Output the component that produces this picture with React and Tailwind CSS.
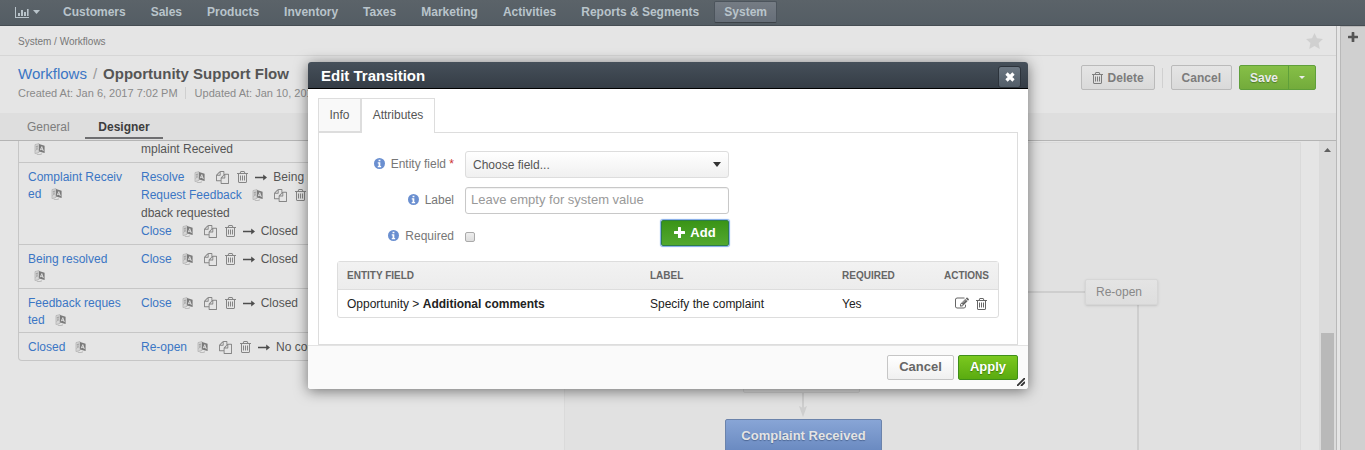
import React from "react";

const TRASH =
  "M704 736v576q0 14-9 23t-23 9h-64q-14 0-23-9t-9-23v-576q0-14 9-23t23-9h64q14 0 23 9t9 23zm256 0v576q0 14-9 23t-23 9h-64q-14 0-23-9t-9-23v-576q0-14 9-23t23-9h64q14 0 23 9t9 23zm256 0v576q0 14-9 23t-23 9h-64q-14 0-23-9t-9-23v-576q0-14 9-23t23-9h64q14 0 23 9t9 23zm128 724v-948h-896v948q0 22 7 40.5t14.5 27 10.5 8.5h832q3 0 10.5-8.5t14.5-27 7-40.5zm-672-1076h448l-48-117q-7-9-17-11h-317q-10 2-17 11zm928 32v64q0 14-9 23t-23 9h-96v948q0 83-47 143.5t-113 60.5h-832q-66 0-113-58.5t-47-141.5v-952h-96q-14 0-23-9t-9-23v-64q0-14 9-23t23-9h309l70-167q15-37 54-63t79-26h320q40 0 79 26t54 63l70 167h309q14 0 23 9t9 23z";
const FILES =
  "M1696 384q40 0 68 28t28 68v1216q0 40-28 68t-68 28h-960q-40 0-68-28t-28-68v-288h-544q-40 0-68-28t-28-68v-672q0-40 20-88t48-76l408-408q28-28 76-48t88-20h416q40 0 68 28t28 68v328q68-40 128-40h416zm-544 213l-299 299h299v-299zm-640-384l-299 299h299v-299zm196 647l316-316v-416h-384v416q0 40-28 68t-68 28h-416v640h512v-256q0-40 20-88t48-76zm956 804v-1152h-384v416q0 40-28 68t-68 28h-416v640h896z";
const EDIT =
  "M888 1184l116-116-152-152-116 116v56h96v96h56zm440-720q-16-16-33 1l-350 350q-17 17-1 33t33-1l350-350q17-17 1-33zm80 594v190q0 119-84.5 203.5t-203.5 84.5h-832q-119 0-203.5-84.5t-84.5-203.5v-832q0-119 84.5-203.5t203.5-84.5h832q63 0 117 25 15 7 18 23 3 17-9 29l-49 49q-14 14-32 8-23-6-45-6h-832q-66 0-113 47t-47 113v832q0 66 47 113t113 47h832q66 0 113-47t47-113v-126q0-13 9-22l64-64q15-15 35-7t20 29zm-96-738l288 288-672 672h-288v-288zm444 132l-92 92-288-288 92-92q28-28 68-28t68 28l152 152q28 28 28 68t-28 68z";

function TrashIcon({ className = "w-[10px]" }) {
  return (
    <svg className={`h-3 shrink-0 ${className}`} viewBox="192 128 1408 1536" preserveAspectRatio="none" fill="currentColor" aria-hidden="true">
      <path d={TRASH} />
    </svg>
  );
}

function FilesIcon() {
  return (
    <svg className="h-[13px] w-[13px] shrink-0" viewBox="0 0 1792 1792" fill="currentColor" aria-hidden="true">
      <path d={FILES} />
    </svg>
  );
}

function EditIcon() {
  return (
    <svg className="h-[13px] w-[14px] shrink-0" viewBox="0 128 1792 1536" fill="currentColor" aria-hidden="true">
      <path d={EDIT} />
    </svg>
  );
}

function LanguageIcon() {
  return (
    <svg className="h-3 w-[11px] shrink-0" viewBox="0 0 11 12" aria-hidden="true">
      <path d="M1 1.6 5 .6V9.4L1 10.6z" fill="#d6d6d6" stroke="#b4b4b4" strokeWidth=".8" />
      <path d="M1.8 3.6 4.2 3M3 2.8C3.4 5 2.6 6.6 1.8 7.4M2.4 5 4.4 6.8" fill="none" stroke="#959595" strokeWidth=".7" />
      <path d="M5 1 10.6 2.8V10L5 8.4z" fill="#7a7a7a" />
      <path d="M6.3 7.2 7.8 3.6 9.3 8M6.8 6.1 8.9 6.7" fill="none" stroke="#e2e2e2" strokeWidth=".9" />
      <path d="M2.6 11 5 11.8 8 10.8" fill="none" stroke="#a8a8a8" strokeWidth=".8" />
    </svg>
  );
}

function ArrowIcon() {
  return (
    <svg className="h-[7px] w-3 shrink-0" viewBox="0 0 12 7" aria-hidden="true">
      <path d="M0 2.7H8.2V.6L12 3.5 8.2 6.4V4.3H0z" fill="#4d4d4d" />
    </svg>
  );
}

function InfoIcon() {
  return (
    <svg className="h-[11px] w-[11px] shrink-0" viewBox="0 0 12 12" aria-hidden="true">
      <circle cx="6" cy="6" r="6" fill="#6a8fd0" />
      <path d="M5 1.8h2v1.7H5zM4.1 4.6h2.8v4h.9V10H4.1V8.6H5V6h-.9z" fill="#fff" />
    </svg>
  );
}

function PlusIcon({ className = "h-[11px] w-[11px]" }) {
  return (
    <svg className={`shrink-0 ${className}`} viewBox="0 0 11 11" fill="currentColor" aria-hidden="true">
      <path d="M4.6 0h1.8q.6 0 .6.6V4h3.4q.6 0 .6.6v1.8q0 .6-.6.6H7v3.4q0 .6-.6.6H4.6q-.6 0-.6-.6V7H.6Q0 7 0 6.4V4.6Q0 4 .6 4H4V.6Q4 0 4.6 0z" />
    </svg>
  );
}

function Caret({ className = "" }) {
  return (
    <svg className={`shrink-0 ${className}`} viewBox="0 0 8 4" preserveAspectRatio="none" fill="currentColor" aria-hidden="true">
      <path d="M0 0h8L4 4z" />
    </svg>
  );
}

const NAV = ["Customers", "Sales", "Products", "Inventory", "Taxes", "Marketing", "Activities", "Reports & Segments"];

function TopNav() {
  return (
    <nav className="flex h-[26px] shrink-0 items-center gap-[5px] border-b border-[#464d53] bg-gradient-to-b from-[#5b6369] to-[#545d64] pb-px text-xs font-bold text-[#b9c4cb]">
      <button type="button" aria-label="Dashboards" className="flex items-center gap-1 pr-2 pl-[15px]">
        <svg className="h-[11px] w-[14px]" viewBox="0 0 14 11" fill="currentColor" aria-hidden="true">
          <path d="M0 0h1v10h13v1H0zM3 6h2v3H3zM6 3h2v6H6zM9 5h2v4H9zM12 2h1.6v7H12z" />
        </svg>
        <Caret className="h-1 w-[7px]" />
      </button>
      {NAV.map((n) => (
        <a key={n} href="#" className="px-[10px] whitespace-nowrap">
          {n}
        </a>
      ))}
      <a
        href="#"
        className="flex h-[22px] items-center rounded-xs border border-[#4c545c] border-b-[#3c4247] bg-gradient-to-b from-[#757c84] to-[#666e78] px-[9px]"
      >
        System
      </a>
    </nav>
  );
}

function PageHeader() {
  const btn =
    "flex h-[25px] items-center rounded-xs border border-[#bababa] bg-gradient-to-b from-[#e5e5e5] to-[#d9d9d9] text-xs font-bold text-[#7c7c7c]";
  return (
    <>
      <div className="flex h-[30px] shrink-0 items-center justify-between border-b border-[#d6d6d6] pt-px pr-[13px] pl-[18px] text-[10px] text-[#777]">
        <div>
          <a href="#">System</a> / <a href="#">Workflows</a>
        </div>
        <svg className="h-4 w-[17px]" viewBox="0 0 17 16" aria-label="Pin to favorites" role="img">
          <path d="M8.5 0 11 5.2 17 6 12.6 9.9 13.8 16 8.5 13 3.2 16 4.4 9.9 0 6 6 5.2z" fill="#d0d0d0" />
        </svg>
      </div>
      <div className="flex h-[57px] shrink-0 items-start justify-between pt-[9px] pr-[20px] pl-[18px]">
        <div>
          <h1 className="text-[15px] leading-[18px] whitespace-nowrap text-[#999]">
            <a href="#" className="text-[#3b76c4]">Workflows</a>
            <span className="px-[6px]">/</span>
            <span className="font-bold text-[#555]">Opportunity Support Flow</span>
          </h1>
          <div className="mt-1 flex h-3 items-center text-[11px] whitespace-nowrap text-[#8a8a8a]">
            <span>Created At: Jan 6, 2017 7:02 PM</span>
            <span className="mr-[9px] ml-[7px] h-3 w-px bg-[#cfcfcf]" />
            <span>Updated At: Jan 10, 2017 2:14 PM</span>
          </div>
        </div>
        <div className="flex items-center">
          <button type="button" className={`${btn} gap-[5px] px-[10px]`}>
            <TrashIcon className="w-[11px]" />
            Delete
          </button>
          <span className="mr-2 ml-[7px] h-5 w-px bg-[#d0d0d0]" />
          <button type="button" className={`${btn} px-[10px]`}>
            Cancel
          </button>
          <div className="ml-[7px] flex h-[25px] rounded-xs border border-[#5f9f3a] bg-gradient-to-b from-[#86bf47] to-[#73ab3b] text-xs font-bold text-[#ebebeb]">
            <button type="button" className="px-[10px] [text-shadow:0_1px_1px_#4d7a2a]">
              Save
            </button>
            <button type="button" aria-label="More save options" className="flex w-[27px] items-center justify-center border-l border-[#5f9f3a]">
              <Caret className="h-[3px] w-[6px]" />
            </button>
          </div>
        </div>
      </div>
      <div className="flex h-7 shrink-0 items-stretch border-b border-[#b4b4b4] bg-[#dedede] pl-4 text-xs">
        <button type="button" className="w-[69px] pl-[11px] text-left text-[#7d7d7d]">
          General
        </button>
        <button type="button" className="mb-px w-[78px] border-b-2 border-[#6e6e70] pt-[3px] text-center font-bold text-[#3d3d3d]">
          Designer
        </button>
      </div>
    </>
  );
}

function Transition({ name, target }) {
  return (
    <div className="flex h-[18px] items-center whitespace-nowrap">
      <a href="#" className="text-[#3b76c4]">
        {name}
      </a>
      <span className="ml-[10px] flex items-center text-[#858585]">
        <LanguageIcon />
        <span className="ml-[11px] flex">
          <FilesIcon />
        </span>
        <TrashIcon className="ml-2 w-[11px]" />
      </span>
      <span className="mr-[6px] ml-[7px] flex">
        <ArrowIcon />
      </span>
      {target}
    </div>
  );
}

const STEPS = [
  { name: ["Complaint Receiv", "ed"], moves: [["Resolve", "Being resolved"], ["Request Feedback", "Fee", "dback requested"], ["Close", "Closed"]] },
  { name: ["Being resolved", ""], moves: [["Close", "Closed"]] },
  { name: ["Feedback reques", "ted"], moves: [["Close", "Closed"]] },
  { name: ["Closed"], moves: [["Re-open", "No complaint"]] },
];

function StepTable() {
  return (
    <div className="w-[565px] shrink-0 overflow-hidden pr-4 pl-[18px] text-xs text-[#555]">
      <table className="w-full table-fixed border-separate border-spacing-0 rounded-b-sm border border-t-0 border-[#c6c6c6]">
        <colgroup>
          <col className="w-[112px]" />
          <col />
        </colgroup>
        <tbody>
          <tr>
            <td className="pb-[5px] pl-[15px] align-top">
              <span className="flex h-[15px] items-center">
                <LanguageIcon />
              </span>
            </td>
            <td className="pb-[5px] pl-[10px] align-top leading-4">mplaint Received</td>
          </tr>
          {STEPS.map((s) => (
            <tr key={s.name[0]}>
              <td className="border-t border-[#c6c6c6] pt-[5px] pb-1 pl-[9px] align-top">
                {s.name.map((part, i) => (
                  <div key={i} className="flex h-[17px] items-center whitespace-nowrap">
                    <a href="#" className="text-[#3b76c4]">
                      {part}
                    </a>
                    {i === s.name.length - 1 && (
                      <span className={part ? "ml-[10px]" : "ml-[6px]"}>
                        <LanguageIcon />
                      </span>
                    )}
                  </div>
                ))}
              </td>
              <td className="border-t border-[#c6c6c6] pt-[5px] pb-1 pl-[10px] align-top">
                {s.moves.map(([name, target, rest]) => (
                  <React.Fragment key={name}>
                    <Transition name={name} target={target} />
                    {rest && <div className="h-[18px] leading-[18px]">{rest}</div>}
                  </React.Fragment>
                ))}
              </td>
            </tr>
          ))}
        </tbody>
      </table>
    </div>
  );
}

function FlowChart() {
  return (
    <div className="relative mt-px -ml-px grow overflow-hidden border-x border-t border-[#dadada] bg-[#e1e1e1]">
      <svg className="absolute top-0 left-0 h-[320px] w-[700px]" viewBox="0 0 700 320" fill="none" aria-hidden="true">
        <path d="M300 149H530M573 154V320M238 240V266" stroke="#cecece" strokeWidth="2" />
        <path d="M234 263 238 265 242 263 238 274z" fill="#cecece" />
      </svg>
      <div className="absolute top-[136px] left-[520px] flex h-[26px] w-[73px] items-center rounded-xs border border-[#d6d6d6] bg-gradient-to-b from-[#e4e4e4] to-[#dedede] pl-[10px] text-xs text-[#888] shadow-sm">
        Re-open
      </div>
      <div className="absolute top-[224px] left-[178px] h-[26px] w-[117px] rounded-xs border border-[#d0d0d0] bg-[#dedede]" />
      <div className="absolute top-[276px] left-[160px] flex h-[35px] w-[157px] items-center justify-center rounded-xs border border-[#6b83ab] bg-gradient-to-b from-[#88a5d6] to-[#6888bf] pb-px text-[13px] font-bold text-[#e4e4e4] [text-shadow:0_1px_1px_#4d6795]">
        Complaint Received
      </div>
    </div>
  );
}

function Dialog() {
  const th = "border-b border-[#ddd] px-[9px] text-[10px] font-bold text-[#666]";
  const label = "mr-[11px] flex w-[117px] items-center justify-end gap-[6px] pb-[2px] text-xs text-[#777]";
  return (
    <div
      role="dialog"
      aria-modal="true"
      aria-labelledby="dialog-title"
      className="absolute top-[62px] left-[308px] w-[720px] rounded-[3px] bg-white text-xs shadow-[0_2px_14px_rgba(0,0,0,0.5)]"
    >
      <header className="flex h-[27px] items-center justify-between rounded-t-[3px] border-b border-black bg-gradient-to-b from-[#46505a] to-[#353d46] pr-[7px] pl-[13px]">
        <h2 id="dialog-title" className="text-[15px] leading-none font-bold text-white">
          Edit Transition
        </h2>
        <button
          type="button"
          aria-label="Close"
          className="mt-1 flex h-[22px] w-[23px] items-center justify-center rounded-[3px] border border-[#2c333b] bg-gradient-to-b from-[#6d7883] to-[#525d68] text-white"
        >
          <svg className="h-[10px] w-[10px]" viewBox="0 0 10 10" aria-hidden="true">
            <path d="M1.5 1.5 8.5 8.5M8.5 1.5 1.5 8.5" stroke="currentColor" strokeWidth="3.2" />
          </svg>
        </button>
      </header>

      <div className="px-[10px] pt-[9px]">
        <div role="tablist" className="relative z-10 -mb-px flex h-[35px] text-[#555]">
          <button type="button" role="tab" aria-selected="false" className="mb-px w-[43px] border border-[#ddd] bg-[#f9f9f9] text-center">
            Info
          </button>
          <button type="button" role="tab" aria-selected="true" className="w-[74px] border border-b-0 border-[#ddd] bg-white pb-[2px] text-center">
            Attributes
          </button>
        </div>
        <div className="border border-[#ddd] px-[18px] pt-[18px] pb-[26px]">
          <form onSubmit={(e) => e.preventDefault()} className="flex flex-col gap-[9px] pb-[11px]">
            <div className="flex h-[27px]">
              <label htmlFor="field" className={label}>
                <InfoIcon />
                <span>
                  Entity field <span className="text-[#c33]">*</span>
                </span>
              </label>
              <div className="relative flex w-[264px]">
                <select
                  id="field"
                  className="w-full appearance-none rounded-[3px] border border-[#ddd] bg-gradient-to-b from-white to-[#f0f0f0] pl-[7px] text-xs text-[#555]"
                >
                  <option>Choose field...</option>
                </select>
                <span className="pointer-events-none absolute top-[11px] right-2 flex text-[#333]">
                  <Caret className="h-[5px] w-2" />
                </span>
              </div>
            </div>
            <div className="flex h-[27px]">
              <label htmlFor="label" className={label}>
                <InfoIcon />
                Label
              </label>
              <input
                id="label"
                type="text"
                placeholder="Leave empty for system value"
                className="w-[264px] rounded-[3px] border border-[#c8c8c8] px-[5px] pb-[2px] text-[13px] shadow-[inset_0_1px_1px_rgba(0,0,0,0.06)] placeholder:text-[#999]"
              />
            </div>
            <div className="flex h-[27px]">
              <label htmlFor="required" className={label}>
                <InfoIcon />
                Required
              </label>
              <div className="flex w-[264px] items-center justify-between">
                <input
                  id="required"
                  type="checkbox"
                  className="h-[10px] w-[10px] appearance-none rounded-[2px] border border-[#aaa] bg-gradient-to-b from-[#eee] to-[#ddd]"
                />
                <button
                  type="button"
                  className="-mt-2 flex h-[26px] w-[68px] items-center justify-center gap-[5px] rounded-xs border border-[#2c7d4a] bg-gradient-to-b from-[#3a9416] to-[#52a82e] text-[13px] font-bold text-white shadow-[0_0_1px_1px_#7fa9e8]"
                >
                  <PlusIcon />
                  Add
                </button>
              </div>
            </div>
          </form>
          <table className="w-full table-fixed border-separate border-spacing-0 rounded-[3px] border border-[#ddd] text-[#222]">
            <colgroup>
              <col className="w-[303px]" />
              <col className="w-[192px]" />
              <col className="w-[92px]" />
              <col />
            </colgroup>
            <thead>
              <tr className="h-7 bg-gradient-to-b from-[#f2f2f2] to-[#ececec]">
                <th className={`${th} text-left`}>ENTITY FIELD</th>
                <th className={`${th} text-left`}>LABEL</th>
                <th className={`${th} text-left`}>REQUIRED</th>
                <th className={`${th} text-right`}>ACTIONS</th>
              </tr>
            </thead>
            <tbody>
              <tr className="h-[27px]">
                <td className="px-[9px] whitespace-nowrap">
                  Opportunity &gt; <b>Additional comments</b>
                </td>
                <td className="px-[9px]">Specify the complaint</td>
                <td className="px-[9px]">Yes</td>
                <td className="px-[11px]">
                  <div className="flex items-center justify-end gap-[7px] text-[#666]">
                    <button type="button" aria-label="Edit">
                      <EditIcon />
                    </button>
                    <button type="button" aria-label="Delete">
                      <TrashIcon className="w-[11px]" />
                    </button>
                  </div>
                </td>
              </tr>
            </tbody>
          </table>
        </div>
      </div>

      <footer className="relative flex h-11 items-start justify-end gap-1 rounded-b-[3px] border-t border-[#e3e3e3] bg-[#fafafa] pt-[9px] pr-[10px] text-[13px] font-bold">
        <button type="button" className="h-[25px] rounded-xs border border-[#c6c6c6] bg-gradient-to-b from-white to-[#f0f0f0] px-[11px] pb-px text-[#666]">
          Cancel
        </button>
        <button
          type="button"
          className="h-[25px] rounded-xs border border-[#3f8f1a] bg-gradient-to-b from-[#7bc81f] to-[#5aab10] px-[11px] pb-px text-white [text-shadow:0_1px_1px_#3d7a0c]"
        >
          Apply
        </button>
        <svg className="absolute right-[3px] bottom-[3px] h-2 w-2" viewBox="0 0 8 8" aria-hidden="true">
          <path d="M0 8 8 0M4 8 8 4" stroke="#333" strokeWidth="1.8" />
        </svg>
      </footer>
    </div>
  );
}

export default function App() {
  return (
    <div className="relative flex h-screen flex-col overflow-hidden bg-[#e5e5e5] font-['Liberation_Sans',Arial,sans-serif]">
      <TopNav />
      <div className="flex min-h-0 grow">
        <main className="flex min-w-0 grow flex-col border-r border-[#b9b9b9]">
          <PageHeader />
          <div className="flex min-h-0 grow">
            <StepTable />
            <FlowChart />
            <div className="w-[18px] shrink-0 bg-[#e5e5e5]" />
            <div className="flex w-[17px] shrink-0 flex-col items-center bg-[#dbdbdb] text-[#606060]">
              <Caret className="mt-[7px] h-1 w-[7px] rotate-180" />
              <div className="mt-[181px] w-[13px] grow bg-[#b9b9b9]" />
            </div>
          </div>
        </main>
        <aside className="ml-[3px] flex w-[25px] shrink-0 justify-center border-t border-l border-[#b9b9b9] bg-[#d0d0d0] pt-[5px] text-[#555]">
          <button type="button" aria-label="Add widget" className="flex h-[10px]">
            <PlusIcon className="h-[10px] w-[10px]" />
          </button>
        </aside>
      </div>
      <Dialog />
    </div>
  );
}
